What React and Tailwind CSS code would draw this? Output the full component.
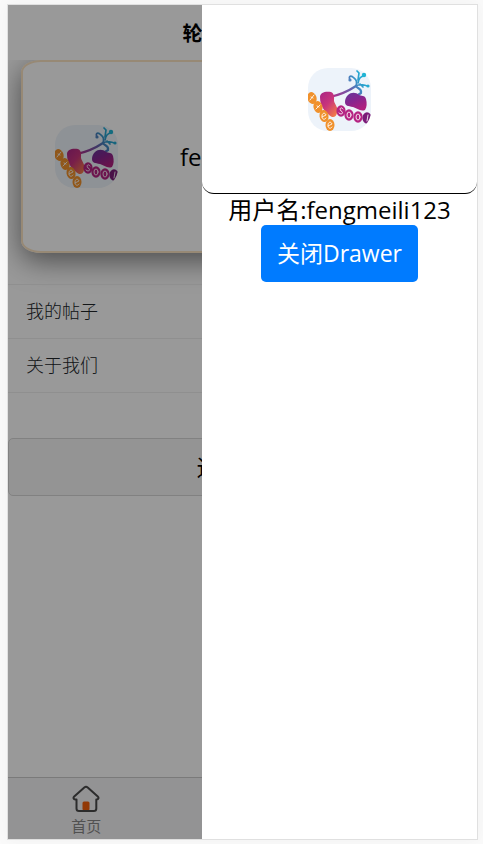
import React from "react";

function SkateLogo() {
  return (
    <svg viewBox="0 0 63 63" className="size-[63px] shrink-0" role="img" aria-label="轮滑">
      <defs>
        <linearGradient id="boot-left" x1="0" y1="0" x2="0.8" y2="1">
          <stop offset="0" stopColor="#a92585" />
          <stop offset="0.5" stopColor="#c8347c" />
          <stop offset="1" stopColor="#f27a48" />
        </linearGradient>
        <linearGradient id="boot-right" x1="0" y1="0" x2="0.6" y2="1">
          <stop offset="0" stopColor="#64379a" />
          <stop offset="0.5" stopColor="#86268f" />
          <stop offset="1" stopColor="#b0207e" />
        </linearGradient>
        <linearGradient id="lace" gradientUnits="userSpaceOnUse" x1="24" y1="30" x2="58" y2="6">
          <stop offset="0" stopColor="#b02b88" />
          <stop offset="0.5" stopColor="#6660ad" />
          <stop offset="0.75" stopColor="#2f9ccb" />
          <stop offset="1" stopColor="#16b5d8" />
        </linearGradient>
        <clipPath id="logo-tile">
          <rect width="63" height="63" rx="20" />
        </clipPath>
      </defs>
      <rect width="63" height="63" rx="20" fill="#edf3fa" />
      <g fill="none" stroke="url(#lace)" strokeLinecap="round" strokeLinejoin="round">
        <path d="M22 29C31 27 42 22 48 18" strokeWidth="2.2" />
        <path d="M48 18C49 15 49 12 46 10C43 7 40 8 42 12" strokeWidth="1.7" />
        <path d="M48 18C52 15 55 17 60 18M50 15C51 10 53 8 56 8M52 16L55 19M50 12L51 5M51 5L49 3" strokeWidth="1.7" />
        <path d="M48 18C49 21 54 20 53 25L50 27" strokeWidth="2.2" />
      </g>
      <circle cx="56" cy="7" r="2.2" fill="#20b4d4" />
      <circle cx="42" cy="12" r="1.6" fill="#4e83be" />
      <circle cx="60" cy="18" r="1.6" fill="#24a9d1" />
      <path d="M12 29C12 24 18 23 23 24C27 26 26 30 26 33C27 37 31 40 29 45C28 50 24 50 21 47C17 43 12 39 12 29Z" fill="url(#boot-left)" />
      <path d="M40 27C43 24 48 24 51 27C53 28 57 27 58 31C59 35 59 39 57 42C52 44 49 40 45 39C40 38 37 38 37 34C37 31 38 29 40 27Z" fill="url(#boot-right)" />
      <g clipPath="url(#logo-tile)">
        <g fill="#f0912c">
          <ellipse cx="4" cy="30" rx="4.5" ry="6" transform="rotate(-18 4 30)" />
          <ellipse cx="10" cy="39" rx="4.500" ry="6" transform="rotate(-14 10 39)" />
          <ellipse cx="16" cy="48" rx="4.5" ry="6" transform="rotate(-10 16 48)" />
          <ellipse cx="22" cy="57" rx="4.5" ry="6" />
        </g>
        <g fill="#b52382">
          <ellipse cx="33" cy="43" rx="4.6" ry="5.8" />
          <ellipse cx="41" cy="47" rx="4.6" ry="5.8" />
          <ellipse cx="50" cy="49" rx="4.6" ry="5.8" />
          <ellipse cx="59" cy="50" rx="4.6" ry="5.8" fill="#7b1c78" />
        </g>
        <g fill="none" stroke="#fff" strokeOpacity="0.85" strokeWidth="1" strokeLinecap="round">
          <path d="M2 32L6 27M3 29L5 30" />
          <path d="M8 41L12 37M9 38L11 39" />
          <path d="M14 49L18 47C17 44 14 45 14 48C14 52 17 52 18 50" />
          <path d="M20 58L24 56C23 53 20 54 20 57C20 61 23 61 24 59" />
          <path d="M35 41C33 38 31 41 33 43C36 44 34 48 31 45" />
          <ellipse cx="41" cy="47" rx="2" ry="3" />
          <ellipse cx="50" cy="49" rx="2" ry="3" />
          <path d="M59 53L60 47" />
        </g>
      </g>
    </svg>
  );
}

function HomeIcon() {
  return (
    <svg viewBox="0 0 28 28" className="size-7" aria-hidden="true">
      <rect x="10.5" y="16.5" width="7" height="9" rx="1.5" fill="#f4600a" />
      <path
        d="M4.500 14.500H3.200C1.500 14.500 1 12.600 2.200 11.500L12.300 2.500C13.400 1.600 14.600 1.600 15.700 2.500L25.800 11.500C27 12.600 26.500 14.500 24.800 14.500H24.300V23.500C24.300 25 23.300 26 21.800 26H7C5.500 26 4.500 25 4.500 23.500Z"
        fill="none"
        stroke="#4a4a4a"
        strokeWidth="2"
        strokeLinejoin="round"
      />
    </svg>
  );
}

function MenuRow({ children }) {
  return (
    <li className="border-b border-[#eee]">
      <a href="#" className="block px-[18px] py-3 text-lg leading-[29px] font-light text-[#212529]">
        {children}
      </a>
    </li>
  );
}

export default function App() {
  return (
    <div className="h-screen bg-[#fafafa] pt-1 pr-[5px] pb-1 pl-[7px] font-['Open_Sans','Noto_Sans_CJK_SC',sans-serif] text-black">
      <div className="relative flex h-full flex-col overflow-hidden border border-[#e0e0e0] bg-white shadow-[0_0_16px_rgba(0,0,0,0.04)]">
        <header className="relative z-10 shrink-0 bg-white pt-[14px] pb-[11px] text-center">
          <h1 className="text-xl leading-[30px] font-bold">轮滑社区论坛</h1>
        </header>

        <main className="flex-1">
          <section className="mx-[13px] flex h-[193px] items-center gap-[62px] rounded-[20px/12px] border-2 border-[#fce4c4] pl-8 shadow-[0_8px_28px_rgba(0,0,0,0.5)]">
            <SkateLogo />
            <span className="text-2xl">fengmeili123</span>
          </section>

          <ul className="mt-[31px] border-t border-[#eee]">
            <MenuRow>我的帖子</MenuRow>
            <MenuRow>关于我们</MenuRow>
          </ul>

          <button
            type="button"
            className="mt-[45px] w-full rounded-[5px] border border-[#d8d8d8] bg-[#f7f7f7] py-3 text-[23px] leading-8"
          >
            退出登录
          </button>
        </main>

        <nav className="grid shrink-0 grid-cols-3 border-t border-[#ccc] bg-[#f5f5f7]">
          <a href="#" className="flex flex-col items-center pt-[7px] text-[15px] leading-[26px] text-[#888]">
            <HomeIcon />
            首页
          </a>
        </nav>

        <div className="absolute inset-0 z-20 bg-black/40" />

        <aside className="absolute inset-y-0 right-0 z-30 flex w-[275px] flex-col items-center bg-white">
          <div className="flex h-[189px] w-full items-center justify-center rounded-b-xl border-b border-black">
            <SkateLogo />
          </div>
          <p className="text-2xl leading-[31px]">用户名:fengmeili123</p>
          <button
            type="button"
            className="rounded-[5px] bg-[#007bff] px-4 py-3 text-[23px] leading-[33px] text-white"
          >
            关闭Drawer
          </button>
        </aside>
      </div>
    </div>
  );
}
